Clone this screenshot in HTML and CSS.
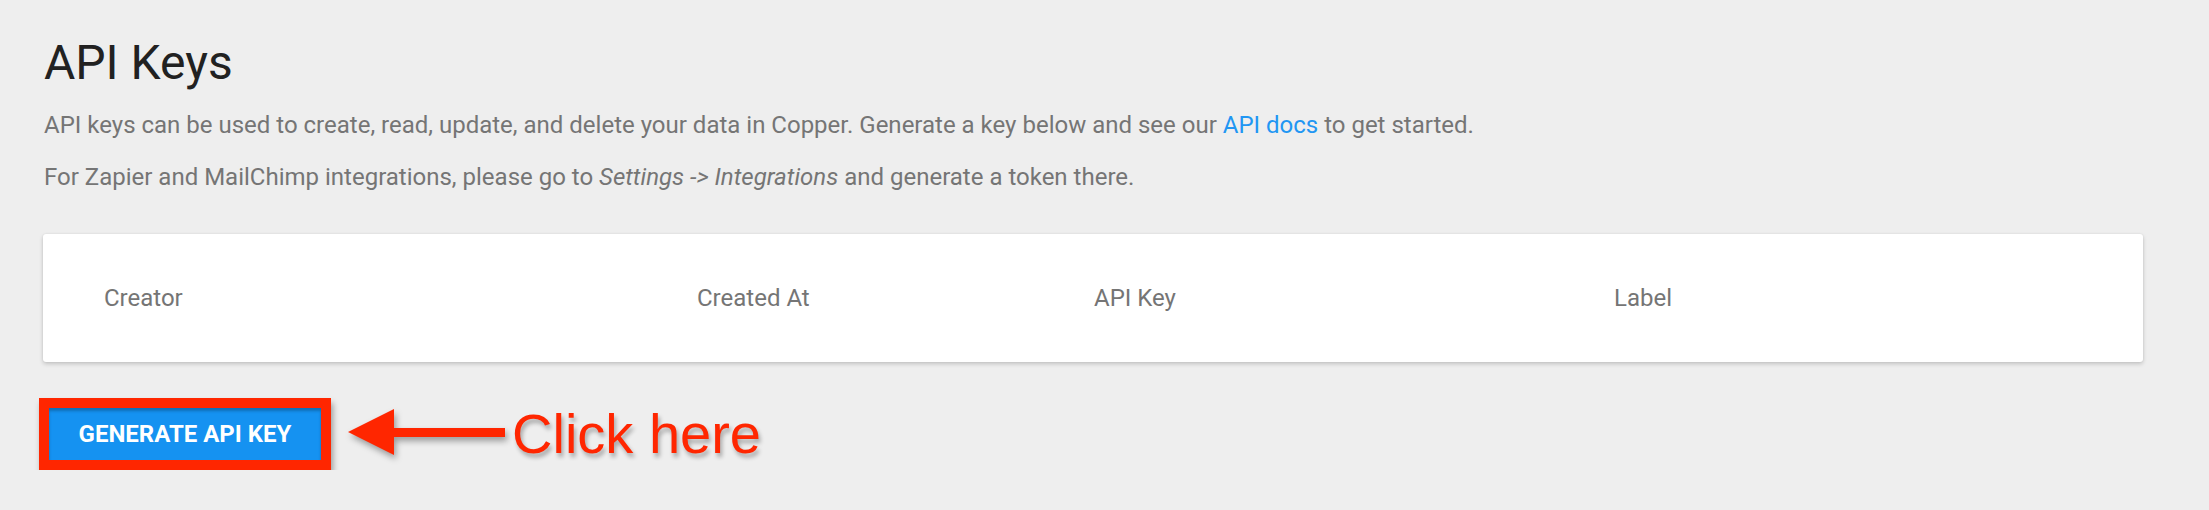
FILE: index.html
```html
<!DOCTYPE html>
<html lang="en">
<head>
<meta charset="utf-8">
<title>API Keys</title>
<link rel="stylesheet" href="styles.css">
</head>
<body>
<main class="page">
  <h1 class="title">API Keys</h1>
  <p class="intro">API keys can be used to create, read, update, and delete your data in Copper. Generate a key below and see our <a class="link" href="#">API docs</a> to get started.</p>
  <p class="intro">For Zapier and MailChimp integrations, please go to <em>Settings -&gt; Integrations</em> and generate a token there.</p>

  <section class="card">
    <div class="table-head">
      <div class="col col-creator">Creator</div>
      <div class="col col-created">Created At</div>
      <div class="col col-key">API Key</div>
      <div class="col col-label">Label</div>
    </div>
  </section>

  <div class="action-row">
    <div class="highlight">
      <button class="btn-primary" type="button">Generate API Key</button>
    </div>
    <svg class="arrow" width="162" height="50" viewBox="0 0 162 50" aria-hidden="true">
      <polygon points="2,23 48,0 48,19 159,19 159,28 48,28 48,46" fill="#ff2600"/>
    </svg>
    <span class="callout">Click here</span>
  </div>
</main>
</body>
</html>
```

FILE: styles.css
```css
html, body {
  margin: 0;
  padding: 0;
  background: #eeeeee;
}

body {
  font-family: Roboto, "Noto Sans", "Liberation Sans", sans-serif;
  color: #757575;
}

.page {
  padding: 35px 66px 0 44px;
}

.title {
  margin: 0;
  font-size: 48px;
  line-height: 56px;
  font-weight: 400;
  color: #212121;
}

.intro {
  margin: 19px 0 0;
  font-size: 24px;
  line-height: 30px;
  color: #757575;
}

.intro + .intro {
  margin-top: 22px;
}

.link {
  color: #2196f3;
  text-decoration: none;
}

.card {
  margin-top: 42px;
  margin-left: -1px;
  height: 128px;
  background: #ffffff;
  border-radius: 3px;
  box-shadow: 0 2px 4px rgba(0, 0, 0, 0.18), 0 0 2px rgba(0, 0, 0, 0.08);
  display: flex;
  align-items: center;
}

.table-head {
  display: grid;
  grid-template-columns: 593px 397px 520px 1fr;
  width: 100%;
  padding-left: 61px;
  box-sizing: border-box;
  font-size: 24px;
  line-height: 30px;
  color: #757575;
}

.action-row {
  margin-top: 36px;
  margin-left: -5px;
  display: flex;
  align-items: center;
}

.highlight {
  border: 10px solid #ff2600;
  box-shadow: 2px 5px 6px rgba(0, 0, 0, 0.35);
  display: flex;
}

.btn-primary {
  width: 272px;
  height: 52px;
  border: none;
  margin: 0;
  padding: 0;
  background: #1592f1;
  color: #ffffff;
  font-family: Roboto, "Liberation Sans", sans-serif;
  font-weight: 700;
  font-size: 24px;
  text-transform: uppercase;
  box-shadow: inset 0 3px 3px rgba(0, 0, 0, 0.25);
  cursor: pointer;
}

.arrow {
  margin-left: 15px;
  filter: drop-shadow(2px 4px 3px rgba(0, 0, 0, 0.35));
}

.callout {
  margin-left: 4px;
  font-family: "Liberation Sans", Arial, sans-serif;
  font-size: 56px;
  line-height: 64px;
  color: #ff2600;
  text-shadow: 2px 4px 4px rgba(0, 0, 0, 0.3);
}
```
